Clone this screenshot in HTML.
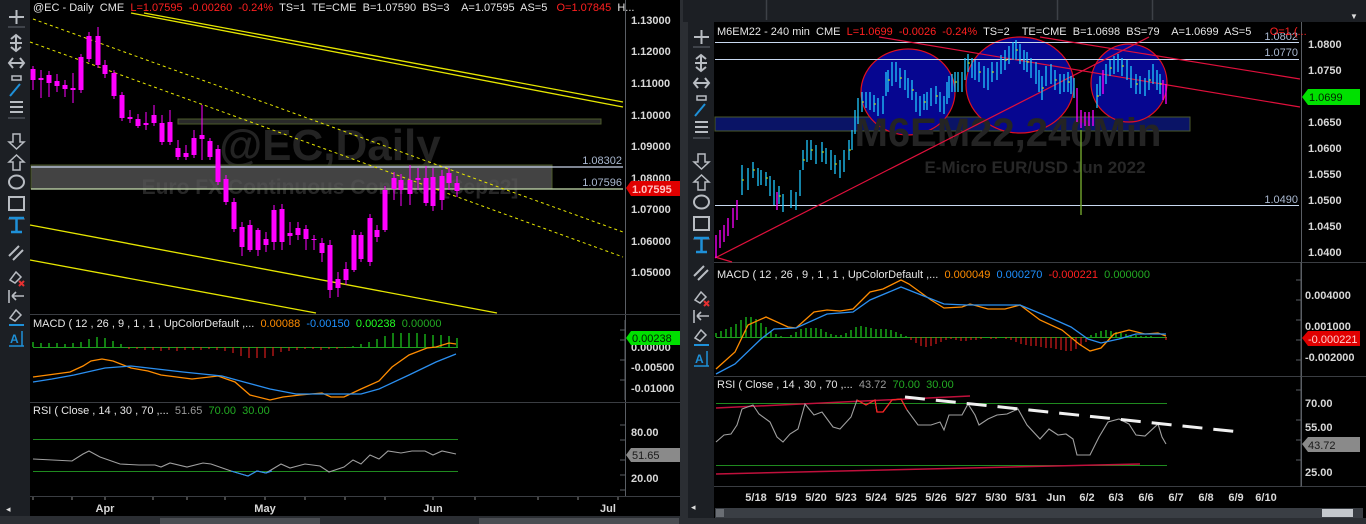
<!DOCTYPE html>
<html><head><meta charset="utf-8"><style>
html,body{margin:0;padding:0;background:#000;width:1366px;height:524px;overflow:hidden}
svg{display:block}
text{font-family:"Liberation Sans",Arial,sans-serif;white-space:pre}
</style></head><body>
<svg width="1366" height="524" viewBox="0 0 1366 524" xmlns="http://www.w3.org/2000/svg" xml:space="preserve">
<rect width="1366" height="524" fill="#000"/>
<rect x="680" y="0" width="8" height="524" fill="#2b2e33"/>
<rect x="0" y="516" width="683" height="8" fill="#2b2e33"/>
<rect x="160" y="518" width="160" height="6" fill="#4a4d52"/>
<rect x="479" y="518" width="200" height="6" fill="#4a4d52"/>
<rect x="683" y="518" width="683" height="6" fill="#2b2e33"/>
<rect x="0" y="0" width="30" height="516" fill="#1c1f24"/>
<g stroke="#b8bcc2" stroke-width="2" fill="none">
<path d="M9 17H24M16.5 10V24"/>
<path d="M8 27H25M8 118H25M8 219H25" stroke="#3f434a"/>
<path d="M16 36V50M11 39L16 35L21 39M11 47L16 51L21 47M10 43H22"/>
<path d="M10 63H23M13 58L9 63L13 68M20 58L24 63L20 68"/>
<path d="M10 96L20 84" stroke="#1e90d8"/><rect x="12" y="76" width="9" height="4" stroke-width="1.5"/>
<path d="M10 102H23M10 107H23M10 112H23"/>
<path d="M13 134V142H9L16.5 149L24 142H20V134Z" stroke-width="1.5"/>
<path d="M13 170V162H9L16.5 155L24 162H20V170Z" stroke-width="1.5"/>
<ellipse cx="16.5" cy="182" rx="7.5" ry="6.5"/>
<rect x="9" y="197" width="15" height="13"/>
<path d="M9 218H24M16.5 218V232M11 232H22" stroke="#1e90d8" stroke-width="2.5"/>
<path d="M9 256L19 246M13 260L23 250"/>
<path d="M10 280L16 272L21 277L15 283Z" stroke-width="1.5"/><path d="M19 281L24 286M24 281L19 286" stroke="#e53030"/>
<path d="M9 290V303M12 296H24M12 296L16 292M12 296L16 300" stroke-width="1.6"/>
<path d="M10 318L16 310L21 315L15 321Z" stroke-width="1.5"/><path d="M9 325H24" stroke="#1e90d8"/>
<path d="M9 346H24M22 331V346" stroke="#1e90d8" stroke-width="1.5"/>
</g>
<text x="10" y="343" fill="#1e90d8" font-size="12" font-weight="bold">A</text>
<text x="6" y="512" fill="#ddd" font-size="9">◂</text>

<g>
<line x1="625.5" y1="0" x2="625.5" y2="497" stroke="#5a5e64"/>
<line x1="30" y1="314.5" x2="680" y2="314.5" stroke="#3a3d42"/>
<line x1="30" y1="402.5" x2="680" y2="402.5" stroke="#3a3d42"/>
<line x1="30" y1="496.5" x2="680" y2="496.5" stroke="#3a3d42"/>
<text x="330" y="160" text-anchor="middle" fill="#232323" font-size="44" font-weight="bold">@EC,Daily</text>
<text x="330" y="194" text-anchor="middle" fill="#272727" font-size="21" font-weight="bold">Euro FX Continuous Contract [Sep22]</text>
<rect x="31" y="165" width="521" height="24" fill="#5a5a5a" fill-opacity="0.75" stroke="#4b5a2a"/>
<rect x="178" y="119" width="423" height="5" fill="#2a2a2a" stroke="#4b5a2a"/>
<line x1="31" y1="167" x2="623" y2="167" stroke="#c8d4ea" stroke-width="1.2"/>
<line x1="31" y1="189" x2="623" y2="189" stroke="#c8e0b0" stroke-width="1.2"/>
<text x="622" y="164" text-anchor="end" fill="#a9b8d0" font-size="11">1.08302</text>
<text x="622" y="186" text-anchor="end" fill="#a9b8d0" font-size="11">1.07596</text>
<g stroke="#e6e600" fill="none">
<line x1="144" y1="13" x2="623" y2="102" stroke-width="1.3"/>
<line x1="131" y1="13" x2="623" y2="107" stroke-width="1.3"/>
<line x1="30" y1="225" x2="497" y2="313" stroke-width="1.3"/>
<line x1="30" y1="260" x2="316" y2="313" stroke-width="1.3"/>
<line x1="33" y1="19" x2="623" y2="232" stroke-dasharray="3 3"/>
<line x1="30" y1="42" x2="623" y2="257" stroke-dasharray="3 3"/>
</g>
<g stroke="#ff00ff" stroke-width="1">
<path d="M33 66V90M41 70V98M49 71V97M57 74V92M65 80V97M73 73V103M81 54V93M89 32V62M98 27V68M105 60V78M114 70V99M122 92V121M130 110V123M138 114V128M146 112V130M154 105V126M162 115V145M170 110V145M178 140V160M186 145V160M194 130V158M202 105V160M210 138V160M218 145V185M226 175V205M234 198V232M242 222V256M250 220V252M258 228V256M266 232V252M274 205V250M282 204V250M290 222V245M298 222V240M306 225V250M314 235V250M322 238V262M330 240V298M338 272V297M346 262V285M354 230V272M361 232V262M370 214V266M377 225V242M385 186V232M394 172V200M401 174V206M410 165V205M418 168V190M426 166V206M433 168V211M442 170V210M449 168V190M457 176V197"/>
</g>
<g fill="#ff00ff">
<rect x="30.5" y="69" width="5" height="11"/><rect x="38.5" y="78" width="5" height="2"/><rect x="46.5" y="75" width="5" height="8"/><rect x="54.5" y="81" width="5" height="5"/><rect x="62.5" y="85" width="5" height="4"/><rect x="70.5" y="88" width="5" height="2"/><rect x="78.5" y="57" width="5" height="33"/><rect x="86.5" y="36" width="5" height="23"/><rect x="95.5" y="36" width="5" height="29"/><rect x="102.5" y="65" width="5" height="9"/><rect x="111.5" y="73" width="5" height="23"/><rect x="119.5" y="95" width="5" height="23"/><rect x="127.5" y="117" width="5" height="2"/><rect x="135.5" y="119" width="5" height="7"/><rect x="143.5" y="123" width="5" height="2"/><rect x="151.5" y="115" width="5" height="8"/><rect x="159.5" y="123" width="5" height="19"/><rect x="167.5" y="122" width="5" height="20"/><rect x="175.5" y="148" width="5" height="9"/><rect x="183.5" y="153" width="5" height="4"/><rect x="191.5" y="138" width="5" height="17"/><rect x="199.5" y="135" width="5" height="4"/><rect x="207.5" y="141" width="5" height="16"/><rect x="215.5" y="149" width="5" height="33"/><rect x="223.5" y="179" width="5" height="23"/><rect x="231.5" y="202" width="5" height="27"/><rect x="239.5" y="227" width="5" height="20"/><rect x="247.5" y="225" width="5" height="25"/><rect x="255.5" y="230" width="5" height="20"/><rect x="263.5" y="239" width="5" height="6"/><rect x="271.5" y="210" width="5" height="32"/><rect x="279.5" y="209" width="5" height="33"/><rect x="287.5" y="233" width="5" height="3"/><rect x="295.5" y="228" width="5" height="7"/><rect x="303.5" y="229" width="5" height="10"/><rect x="311.5" y="239" width="5" height="1"/><rect x="319.5" y="243" width="5" height="10"/><rect x="327.5" y="245" width="5" height="45"/><rect x="335.5" y="279" width="5" height="9"/><rect x="343.5" y="269" width="5" height="11"/><rect x="351.5" y="235" width="5" height="35"/><rect x="358.5" y="235" width="5" height="24"/><rect x="367.5" y="218" width="5" height="44"/><rect x="374.5" y="230" width="5" height="7"/><rect x="382.5" y="190" width="5" height="40"/><rect x="391.5" y="178" width="5" height="11"/><rect x="398.5" y="180" width="5" height="10"/><rect x="407.5" y="180" width="5" height="14"/><rect x="415.5" y="178" width="5" height="2"/><rect x="423.5" y="178" width="5" height="25"/><rect x="430.5" y="177" width="5" height="29"/><rect x="439.5" y="176" width="5" height="24"/><rect x="446.5" y="173" width="5" height="10"/><rect x="454.5" y="183" width="5" height="8"/>
</g>
<text x="33" y="11" font-size="11" fill="#e6e6e6">@EC - Daily  CME  <tspan fill="#ff2020">L=1.07595  -0.00260  -0.24%</tspan>  TS=1  TE=CME  B=1.07590  BS=3    A=1.07595  AS=5   <tspan fill="#ff2020">O=1.07845</tspan>  H...</text>
<g fill="#d8d8d8" font-size="11" font-weight="bold">
<text x="631" y="24">1.13000</text><text x="631" y="55">1.12000</text><text x="631" y="87">1.11000</text><text x="631" y="119">1.10000</text><text x="631" y="150">1.09000</text><text x="631" y="182">1.08000</text><text x="631" y="213">1.07000</text><text x="631" y="245">1.06000</text><text x="631" y="276">1.05000</text>
<text x="631" y="351">0.00000</text><text x="631" y="371">-0.00500</text><text x="631" y="392">-0.01000</text>
<text x="631" y="436">80.00</text><text x="631" y="482">20.00</text>
</g>
<path d="M626 188L631 181H680V196H631Z" fill="#e00000"/>
<text x="632" y="193" fill="#ffc0c0" font-size="11" font-weight="bold">1.07595</text>
<text x="33" y="327" font-size="11" fill="#e6e6e6">MACD ( 12 , 26 , 9 , 1 , 1 , UpColorDefault ,...  <tspan fill="#ff8c00">0.00088</tspan>  <tspan fill="#1e90ff">-0.00150</tspan>  <tspan fill="#22ff22">0.00238</tspan>  <tspan fill="#22aa22">0.00000</tspan></text>
<line x1="33" y1="347.5" x2="458" y2="347.5" stroke="#1f9e1f"/>
<path d="M33 347V342M41 347V343M49 347V343M57 347V343M65 347V344M73 347V343M81 347V342M89 347V339M97 347V337M105 347V338M113 347V341M121 347V344" stroke="#22ff22"/>
<path d="M129 347V349M137 347V349M145 347V350M153 347V350M161 347V351M169 347V350M177 347V351M185 347V350M193 347V350M201 347V350M209 347V349M217 347V350M225 347V351M233 347V353M241 347V356M249 347V358M257 347V358M265 347V358M273 347V356M281 347V352M289 347V351M297 347V350M305 347V349M313 347V349M321 347V350M329 347V349M337 347V349M345 347V348" stroke="#ff2020"/>
<path d="M353 347V346M361 347V344M369 347V342M377 347V339M385 347V336M393 347V333M401 347V333M409 347V333M417 347V333M425 347V334M433 347V335M441 347V335M449 347V336M457 347V338" stroke="#22ff22"/>
<polyline fill="none" stroke="#ff8c00" stroke-width="1.3" points="33,377 70,372 83,366 91,361 102,359 113,361 131,368 148,371 161,375 192,379 218,376 235,382 250,395 270,400 283,397 300,395 322,393 331,397 344,397 361,389 379,381 392,367 409,355 427,348 436,347 449,343 456,344"/>
<polyline fill="none" stroke="#2b8ff0" stroke-width="1.3" points="33,382 52,379 74,375 105,368 131,366 183,372 222,376 244,382 270,389 296,394 331,394 361,394 379,389 409,375 436,362 456,354"/>
<path d="M626 338L631 331H680V345H631Z" fill="#00e000"/>
<text x="632" y="342" fill="#002000" font-size="11">0.00238</text>
<text x="33" y="414" font-size="11" fill="#e6e6e6">RSI ( Close , 14 , 30 , 70 ,...  <tspan fill="#9a9a9a">51.65</tspan>  <tspan fill="#22aa22">70.00</tspan>  <tspan fill="#22aa22">30.00</tspan></text>
<line x1="33" y1="439.5" x2="458" y2="439.5" stroke="#1f8a1f"/>
<line x1="33" y1="471.5" x2="458" y2="471.5" stroke="#1f8a1f"/>
<polyline fill="none" stroke="#a0a0a0" stroke-width="1.1" points="33,459 72,461 83,454 89,451 100,457 120,464 139,465 155,465 161,467 170,463 187,467 203,463 211,464 231,471 248,476 257,471 266,473 281,464 290,468 305,464 320,466 329,472 344,467 353,460 361,464 370,455 379,459 388,451 401,453 412,451 425,451 433,455 442,451 456,454"/>
<polyline fill="none" stroke="#2b8ff0" stroke-width="1.1" points="231,471 248,476 257,471 266,473 272,471"/>
<path d="M626 455L631 448H680V462H631Z" fill="#8a8a8a"/>
<text x="632" y="459" fill="#1a1a1a" font-size="11">51.65</text>
<g fill="#d8d8d8" font-size="11" font-weight="bold" text-anchor="middle">
<text x="105" y="512">Apr</text><text x="265" y="512">May</text><text x="433" y="512">Jun</text><text x="608" y="512">Jul</text></g>
<path d="M33 497V500M72 497V500M105 497V500M153 497V500M187 497V500M225 497V500M265 497V500M305 497V500M345 497V500M385 497V500M433 497V500M475 497V500M538 497V500M578 497V500M618 497V500" stroke="#888"/>
<path d="M625 320V400M620 330H625M620 340H625M620 360H625M620 380H625M620 425H625M620 440H625M620 460H625M620 475H625M620 490H625" stroke="#5a5e64"/>
</g>

<rect x="683" y="0" width="683" height="22" fill="#1c1f24"/>
<path d="M766.5 0V20M1057.5 0V20M1152.5 0V20" stroke="#3d4147" stroke-width="1.5"/>
<text x="1354" y="19" fill="#ddd" font-size="8" text-anchor="middle">▼</text>
<rect x="688" y="22" width="26" height="496" fill="#1c1f24"/>
<g stroke="#b8bcc2" stroke-width="2" fill="none" transform="translate(685,20)">
<path d="M9 17H24M16.5 10V24"/>
<path d="M8 27H25M8 118H25M8 219H25" stroke="#3f434a"/>
<path d="M16 36V50M11 39L16 35L21 39M11 47L16 51L21 47M10 43H22"/>
<path d="M10 63H23M13 58L9 63L13 68M20 58L24 63L20 68"/>
<path d="M10 96L20 84" stroke="#1e90d8"/><rect x="12" y="76" width="9" height="4" stroke-width="1.5"/>
<path d="M10 102H23M10 107H23M10 112H23"/>
<path d="M13 134V142H9L16.5 149L24 142H20V134Z" stroke-width="1.5"/>
<path d="M13 170V162H9L16.5 155L24 162H20V170Z" stroke-width="1.5"/>
<ellipse cx="16.5" cy="182" rx="7.5" ry="6.5"/>
<rect x="9" y="197" width="15" height="13"/>
<path d="M9 218H24M16.5 218V232M11 232H22" stroke="#1e90d8" stroke-width="2.5"/>
<path d="M9 256L19 246M13 260L23 250"/>
<path d="M10 280L16 272L21 277L15 283Z" stroke-width="1.5"/><path d="M19 281L24 286M24 281L19 286" stroke="#e53030"/>
<path d="M9 290V303M12 296H24M12 296L16 292M12 296L16 300" stroke-width="1.6"/>
<path d="M10 318L16 310L21 315L15 321Z" stroke-width="1.5"/><path d="M9 325H24" stroke="#1e90d8"/>
<path d="M9 346H24M22 331V346" stroke="#1e90d8" stroke-width="1.5"/>
</g>
<text x="695" y="363" fill="#1e90d8" font-size="12" font-weight="bold">A</text>
<text x="691" y="510" fill="#ddd" font-size="9">◂</text>

<line x1="1301.5" y1="22" x2="1301.5" y2="487" stroke="#5a5e64"/>
<line x1="714" y1="262.5" x2="1366" y2="262.5" stroke="#3a3d42"/>
<line x1="714" y1="376.5" x2="1366" y2="376.5" stroke="#3a3d42"/>
<line x1="714" y1="486.5" x2="1366" y2="486.5" stroke="#3a3d42"/>
<rect x="715" y="117" width="475" height="14" fill="#0a1466" stroke="#4b5a2a"/>
<ellipse cx="908" cy="92" rx="47" ry="43" fill="#060690" stroke="#e01020" stroke-width="1.2"/>
<ellipse cx="1020" cy="85" rx="54" ry="48" fill="#060690" stroke="#e01020" stroke-width="1.2"/>
<ellipse cx="1129" cy="83" rx="38" ry="39" fill="#060690" stroke="#e01020" stroke-width="1.2"/>
<text x="1008" y="146" text-anchor="middle" fill="#242424" font-size="40" font-weight="bold">M6EM22,240Min</text>
<text x="1035" y="173" text-anchor="middle" fill="#272727" font-size="17" font-weight="bold">E-Micro EUR/USD Jun 2022</text>
<line x1="715" y1="42.5" x2="1299" y2="42.5" stroke="#c8d8f0"/>
<line x1="715" y1="59.5" x2="1299" y2="59.5" stroke="#c8d8f0"/>
<line x1="715" y1="205.5" x2="1299" y2="205.5" stroke="#c8d8f0"/>
<text x="1298" y="40" text-anchor="end" fill="#a9b8d0" font-size="11">1.0802</text>
<text x="1298" y="56" text-anchor="end" fill="#a9b8d0" font-size="11">1.0770</text>
<text x="1298" y="203" text-anchor="end" fill="#a9b8d0" font-size="11">1.0490</text>
<g stroke="#e0103c" stroke-width="1.2">
<line x1="715" y1="258" x2="1149" y2="37"/>
<line x1="879" y1="37" x2="1300" y2="107"/>
<line x1="1040" y1="37" x2="1300" y2="79"/>
<line x1="715" y1="257" x2="732" y2="262"/>
</g>
<line x1="1081" y1="130" x2="1081" y2="215" stroke="#6a9a2a" stroke-width="1.5"/>
<g stroke="#1ec8ff" stroke-width="1.3">
<path d="M742 165V195M748 168V190M753 162V178M758 168V186M761 170V185M766 172V186M770 176V196M774 180V205M779 186V204M783 194V212M791 190V208M796 192V210M800 170V196M803 150V170M807 140V162M811 140V160M816 145V164M822 142V162M826 148V164M831 150V170M835 155V174M840 160V178M844 150V172M849 140V160M852 130V150M855 110V134M858 98V124M862 92V112M866 92V108M870 92V110M874 95V112M878 98V116M883 96V114M886 72V96M888 70V92M892 62V86M896 62V82M900 68V88M905 70V90M908 78V98M912 80V100M916 92V112M920 96V116M924 94V110M927 92V110M931 88V106M936 86V104M940 92V112M944 96V114M947 82V104M949 76V98M952 74V92M955 72V92M958 72V92M962 72V92M965 58V80M968 54V72M972 58V78M975 60V80M979 62V82M984 66V88M988 68V90M992 62V82M997 62V80M1001 55V74M1005 50V70M1009 46V64M1013 42V60M1016 40V60M1020 44V64M1024 50V70M1027 52V72M1031 58V78M1036 62V84M1039 70V92M1042 76V100M1046 66V86M1051 64V84M1055 70V90M1060 74V94M1064 74V92M1068 72V92M1071 76V94M1074 78V98M1097 84V108M1100 76V96M1106 64V84M1110 60V76M1114 56V74M1118 54V72M1122 58V76M1127 60V80M1131 66V88M1136 74V94M1140 76V94M1145 78V96M1149 70V90M1153 64V84M1157 70V90M1160 74V94"/>
</g>
<g stroke="#ff00ff" stroke-width="1.3">
<path d="M716 235V258M720 230V248M724 225V242M728 218V236M733 208V228M737 200V220M777 192V210M1077 88V122M1081 110V128M1085 112V126M1089 112V126M1093 110V126M1103 70V94M1163 80V100M1166 84V104"/>
</g>
<g stroke="#e8e800" stroke-width="1">
<path d="M742 180h2M753 170h2M766 178h2M779 196h2M803 160h2M811 150h2M822 152h2M835 164h2M849 150h2M862 102h2M874 104h2M888 80h2M900 78h2M912 90h2M924 102h2M936 96h2M955 82h2M968 63h2M979 72h2M992 72h2M1005 60h2M1016 50h2M1027 62h2M1042 88h2M1055 80h2M1068 82h2M1097 96h2M1110 68h2M1122 66h2M1136 84h2M1149 80h2M1160 84h2"/>
</g>
<text x="717" y="35" font-size="11" fill="#e6e6e6">M6EM22 - 240 min  CME  <tspan fill="#ff2020">L=1.0699  -0.0026  -0.24%</tspan>  TS=2    TE=CME  B=1.0698  BS=79    A=1.0699  AS=5      <tspan fill="#ff2020">O=1.(...</tspan></text>
<g fill="#d8d8d8" font-size="11" font-weight="bold">
<text x="1308" y="48">1.0800</text><text x="1308" y="74">1.0750</text><text x="1308" y="126">1.0650</text><text x="1308" y="152">1.0600</text><text x="1308" y="178">1.0550</text><text x="1308" y="204">1.0500</text><text x="1308" y="230">1.0450</text><text x="1308" y="256">1.0400</text>
<text x="1305" y="299">0.004000</text><text x="1305" y="330">0.001000</text><text x="1305" y="361">-0.002000</text>
<text x="1305" y="407">70.00</text><text x="1305" y="431">55.00</text><text x="1305" y="476">25.00</text>
</g>
<path d="M1302 97L1308 89H1360V105H1308Z" fill="#00e000"/>
<text x="1309" y="101" fill="#002000" font-size="11">1.0699</text>
<text x="717" y="278" font-size="11" fill="#e6e6e6">MACD ( 12 , 26 , 9 , 1 , 1 , UpColorDefault ,...  <tspan fill="#ff8c00">0.000049</tspan>  <tspan fill="#1e90ff">0.000270</tspan>  <tspan fill="#ff2020">-0.000221</tspan>  <tspan fill="#22aa22">0.000000</tspan></text>
<line x1="716" y1="337.5" x2="1167" y2="337.5" stroke="#1f9e1f"/>
<path stroke="#22ff22" d="M716 337v-4M721 337v-6M726 337v-8M731 337v-10M736 337v-13M741 337v-17M746 337v-20M751 337v-20M756 337v-18M761 337v-14M766 337v-10M771 337v-6M776 337v-3M781 337v-1M791 337v-2M796 337v-5M801 337v-8M806 337v-9M811 337v-9M816 337v-9M821 337v-8M826 337v-5M831 337v-3M836 337v-2M841 337v-2M846 337v-4M851 337v-7M856 337v-10M861 337v-11M866 337v-10M871 337v-9M876 337v-8M881 337v-8M886 337v-8M891 337v-7M896 337v-5M901 337v-3M906 337v-1M1091 337v-2M1096 337v-4M1101 337v-6M1106 337v-7M1111 337v-6M1116 337v-5M1121 337v-4M1126 337v-3M1131 337v-2M1136 337v-2M1141 337v-1M1146 337v-1M1151 337v-1"/>
<path stroke="#ff2020" d="M911 337v3M916 337v6M921 337v9M926 337v10M931 337v9M936 337v7M941 337v5M946 337v3M951 337v2M956 337v3M961 337v4M966 337v4M971 337v3M976 337v3M981 337v2M991 337v2M996 337v2M1006 337v2M1011 337v3M1016 337v5M1021 337v7M1026 337v8M1031 337v9M1036 337v9M1041 337v10M1046 337v11M1051 337v11M1056 337v12M1061 337v13M1066 337v14M1071 337v14M1076 337v12M1081 337v9M1086 337v5M1166 337v3"/>
<polyline fill="none" stroke="#ff8c00" stroke-width="1.3" points="716,369 735,352 748,325 766,317 788,327 796,328 814,312 827,310 840,311 853,309 870,292 883,289 901,280 909,284 931,300 944,308 962,307 970,304 988,309 1005,309 1020,305 1040,320 1062,330 1079,344 1090,351 1101,348 1114,334 1129,330 1145,334 1158,333 1166,336"/>
<polyline fill="none" stroke="#2b8ff0" stroke-width="1.3" points="716,374 735,364 761,339 774,329 796,328 827,314 853,312 870,300 901,287 944,304 966,305 1020,305 1044,315 1071,327 1088,339 1101,343 1119,339 1136,334 1166,334"/>
<path d="M1302 338L1308 331H1360V346H1308Z" fill="#e00000"/>
<text x="1308" y="343" fill="#ffd0d0" font-size="11">-0.000221</text>
<text x="717" y="388" font-size="11" fill="#e6e6e6">RSI ( Close , 14 , 30 , 70 ,...  <tspan fill="#9a9a9a">43.72</tspan>  <tspan fill="#22aa22">70.00</tspan>  <tspan fill="#22aa22">30.00</tspan></text>
<line x1="716" y1="403.5" x2="1167" y2="403.5" stroke="#1f8a1f"/>
<line x1="716" y1="465.5" x2="1167" y2="465.5" stroke="#1f8a1f"/>
<line x1="716" y1="408" x2="970" y2="396" stroke="#c0103c" stroke-width="1.5"/>
<line x1="716" y1="474" x2="1140" y2="464" stroke="#c0103c" stroke-width="1.5"/>
<polyline fill="none" stroke="#a0a0a0" stroke-width="1.1" points="716,442 724,435 731,434 737,425 742,409 753,405 759,414 770,422 777,437 783,442 790,434 798,429 805,404 814,415 822,412 833,427 840,429 851,417 857,400 866,405 875,400 877,412 883,412 892,400 901,399 907,410 918,425 931,425 940,422 944,430 949,415 962,415 968,404 975,415 979,425 988,419 997,415 1007,414 1018,409 1027,425 1040,439 1049,429 1058,435 1066,434 1073,439 1077,455 1090,455 1099,437 1108,422 1119,419 1129,424 1136,435 1145,436 1158,424 1162,437 1166,444"/>
<polyline fill="none" stroke="#ff2020" stroke-width="1.2" points="857,400 866,405 875,400 877,412 883,412 892,400 901,399 907,410"/>
<line x1="905" y1="397" x2="1240" y2="432" stroke="#f0f0f0" stroke-width="3" stroke-dasharray="20 11"/>
<path d="M1302 444L1308 437H1360V452H1308Z" fill="#8a8a8a"/>
<text x="1308" y="449" fill="#1a1a1a" font-size="11">43.72</text>
<path d="M1301 262V376M1296 280H1301M1296 300H1301M1296 320H1301M1296 340H1301M1296 360H1301M1301 376V487M1296 390H1301M1296 420H1301M1296 440H1301M1296 460H1301" stroke="#5a5e64"/>
<g fill="#d8d8d8" font-size="11" font-weight="bold" text-anchor="middle">
<text x="756" y="501">5/18</text><text x="786" y="501">5/19</text><text x="816" y="501">5/20</text><text x="846" y="501">5/23</text><text x="876" y="501">5/24</text><text x="906" y="501">5/25</text><text x="936" y="501">5/26</text><text x="966" y="501">5/27</text><text x="996" y="501">5/30</text><text x="1026" y="501">5/31</text><text x="1056" y="501">Jun</text><text x="1087" y="501">6/2</text><text x="1116" y="501">6/3</text><text x="1146" y="501">6/6</text><text x="1176" y="501">6/7</text><text x="1206" y="501">6/8</text><text x="1236" y="501">6/9</text><text x="1266" y="501">6/10</text></g>
<rect x="715" y="508" width="648" height="10" fill="#3a3e44"/>
<rect x="1322" y="509" width="31" height="8" fill="#c4c8cd"/>
<rect x="716" y="509" width="8" height="8" fill="#6a6e74"/>
</svg>
</body></html>
